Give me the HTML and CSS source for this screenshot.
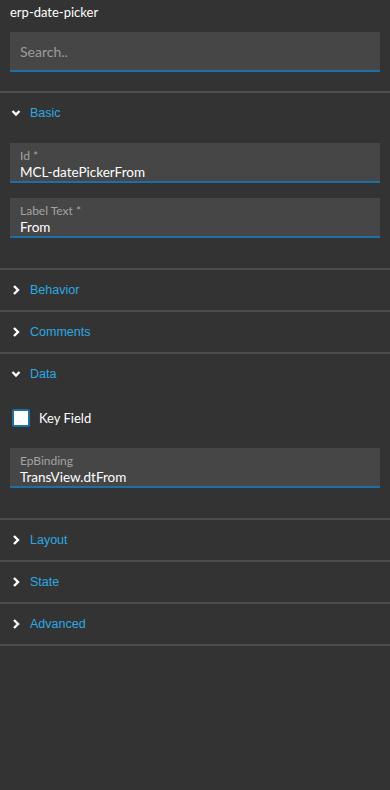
FILE: index.html
```html
<!DOCTYPE html>
<html lang="en">
<head>
    <meta charset="UTF-8" />
    <meta name="viewport" content="width=device-width, initial-scale=1" />
    <title>erp-date-picker</title>
    <link rel="stylesheet" href="styles.css">
</head>
<body>
<div class="panel">
    <div class="panel-title">erp-date-picker</div>
    <div class="search-wrap">
        <input type="text" class="search" placeholder="Search.." />
    </div>

    <div class="section open">
        <div class="section-head">
            <svg class="chev" viewBox="0 0 10 10" width="10" height="10"><path d="M1.5 3 L5 6.5 L8.5 3" /></svg>
            <span>Basic</span>
        </div>
        <div class="section-body">
            <div class="field">
                <label>Id *</label>
                <div class="value">MCL-datePickerFrom</div>
            </div>
            <div class="field">
                <label>Label Text *</label>
                <div class="value">From</div>
            </div>
        </div>
    </div>

    <div class="section">
        <div class="section-head">
            <svg class="chev" viewBox="0 0 10 10" width="10" height="10"><path d="M3 1 L7 5 L3 9" /></svg>
            <span>Behavior</span>
        </div>
    </div>

    <div class="section">
        <div class="section-head">
            <svg class="chev" viewBox="0 0 10 10" width="10" height="10"><path d="M3 1 L7 5 L3 9" /></svg>
            <span>Comments</span>
        </div>
    </div>

    <div class="section open">
        <div class="section-head">
            <svg class="chev" viewBox="0 0 10 10" width="10" height="10"><path d="M1.5 3 L5 6.5 L8.5 3" /></svg>
            <span>Data</span>
        </div>
        <div class="section-body data-body">
            <div class="check-row">
                <span class="checkbox"></span>
                <span>Key Field</span>
            </div>
            <div class="field">
                <label>EpBinding</label>
                <div class="value">TransView.dtFrom</div>
            </div>
        </div>
    </div>

    <div class="section">
        <div class="section-head">
            <svg class="chev" viewBox="0 0 10 10" width="10" height="10"><path d="M3 1 L7 5 L3 9" /></svg>
            <span>Layout</span>
        </div>
    </div>

    <div class="section">
        <div class="section-head">
            <svg class="chev" viewBox="0 0 10 10" width="10" height="10"><path d="M3 1 L7 5 L3 9" /></svg>
            <span>State</span>
        </div>
    </div>

    <div class="section last">
        <div class="section-head">
            <svg class="chev" viewBox="0 0 10 10" width="10" height="10"><path d="M3 1 L7 5 L3 9" /></svg>
            <span>Advanced</span>
        </div>
    </div>
</div>
</body>
</html>
```

FILE: styles.css
```css
:root {
    --bg: #333333;
    --field-bg: #464646;
    --line: #4d4d4d;
    --accent: #1e6ea8;
    --head-text: #2aaae4;
    --muted: #a3a3a3;
}

html, body {
    margin: 0;
    background-color: var(--bg);
}

body {
    font-family: Lato, "Open Sans", sans-serif;
    color: #fff;
    min-height: 790px;
}

.panel-title {
    padding: 4px 10px 0;
    height: 16px;
    line-height: 16px;
    font-size: 13px;
}

.search-wrap {
    padding: 12px 10px 19px;
}

.search {
    display: block;
    width: 100%;
    height: 40px;
    box-sizing: border-box;
    padding: 0 10px;
    border: none;
    border-bottom: 2px solid var(--accent);
    background-color: var(--field-bg);
    color: #fff;
    font-family: inherit;
    font-size: 14px;
    outline: none;
}

.search::placeholder {
    color: #9c9c9c;
}

.section {
    border-top: 2px solid var(--line);
}

.section.last {
    border-bottom: 2px solid var(--line);
}

.section-head {
    display: flex;
    align-items: center;
    height: 40px;
    padding-left: 11px;
    gap: 9px;
    font-family: "Liberation Sans", Arial, sans-serif;
    font-size: 12.5px;
    color: var(--head-text);
}

.chev {
    fill: none;
    stroke: #fff;
    stroke-width: 2.4;
    flex: none;
}

.section-body {
    padding: 10px 10px 30px;
    display: flex;
    flex-direction: column;
    gap: 15px;
}

.field {
    height: 40px;
    box-sizing: border-box;
    padding: 5px 10px 0;
    background-color: var(--field-bg);
    border-bottom: 2px solid var(--accent);
}

.field label {
    display: block;
    font-size: 12px;
    line-height: 15px;
    color: var(--muted);
}

.field .value {
    font-size: 13.5px;
    line-height: 18px;
    color: #fff;
}

.data-body {
    padding-top: 15px;
    gap: 21px;
}

.check-row {
    display: flex;
    align-items: center;
    gap: 9px;
    height: 18px;
    padding-left: 2px;
    font-size: 13px;
}

.checkbox {
    width: 18px;
    height: 18px;
    box-sizing: border-box;
    border: 2px solid var(--accent);
    border-radius: 2px;
    background-color: #fff;
}
```
